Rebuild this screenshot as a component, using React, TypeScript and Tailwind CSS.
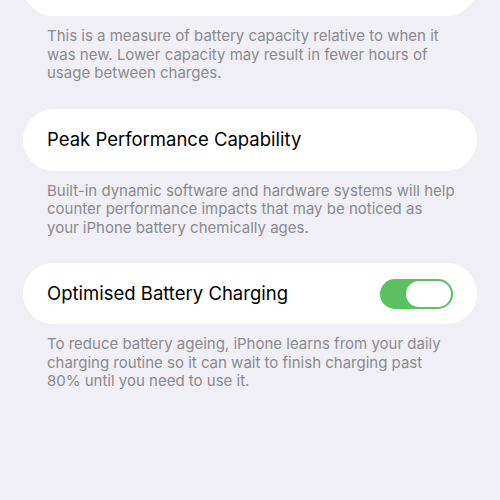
import React from 'react';

const font = { fontFamily: 'Inter, "Noto Sans", sans-serif' };

function Footnote({ children }: { children: React.ReactNode }) {
  return (
    <p className="pl-[47px] pr-[20px] mt-[11px] text-[15px] leading-[18.5px] text-[#8a8a8e] whitespace-nowrap">
      {children}
    </p>
  );
}

function Toggle() {
  return (
    <div className="w-[73px] h-[30px] rounded-full bg-[#5ac060] p-[2px] flex justify-end">
      <div className="w-[45px] h-full rounded-full bg-white" />
    </div>
  );
}

export default function App() {
  return (
    <div className="w-[500px] h-[500px] overflow-hidden bg-[#f0eff5]" style={font}>
      {/* top card, cut off by the top edge */}
      <div className="mx-[23px] h-[60px] -mt-[44px] rounded-[30px] bg-white" />
      <Footnote>
        This is a measure of battery capacity relative to when it
        <br />
        was new. Lower capacity may result in fewer hours of
        <br />
        usage between charges.
      </Footnote>

      <div className="mx-[23px] mt-[26px] h-[62px] rounded-[31px] bg-white flex items-center px-[24px]">
        <span className="text-[18.5px] text-black">Peak Performance Capability</span>
      </div>
      <Footnote>
        Built-in dynamic software and hardware systems will help
        <br />
        counter performance impacts that may be noticed as
        <br />
        your iPhone battery chemically ages.
      </Footnote>

      <div className="mx-[23px] mt-[26px] h-[61px] rounded-[30px] bg-white flex items-center justify-between pl-[24px] pr-[24px]">
        <span className="text-[18.5px] text-black">Optimised Battery Charging</span>
        <Toggle />
      </div>
      <Footnote>
        To reduce battery ageing, iPhone learns from your daily
        <br />
        charging routine so it can wait to finish charging past
        <br />
        80% until you need to use it.
      </Footnote>
    </div>
  );
}
